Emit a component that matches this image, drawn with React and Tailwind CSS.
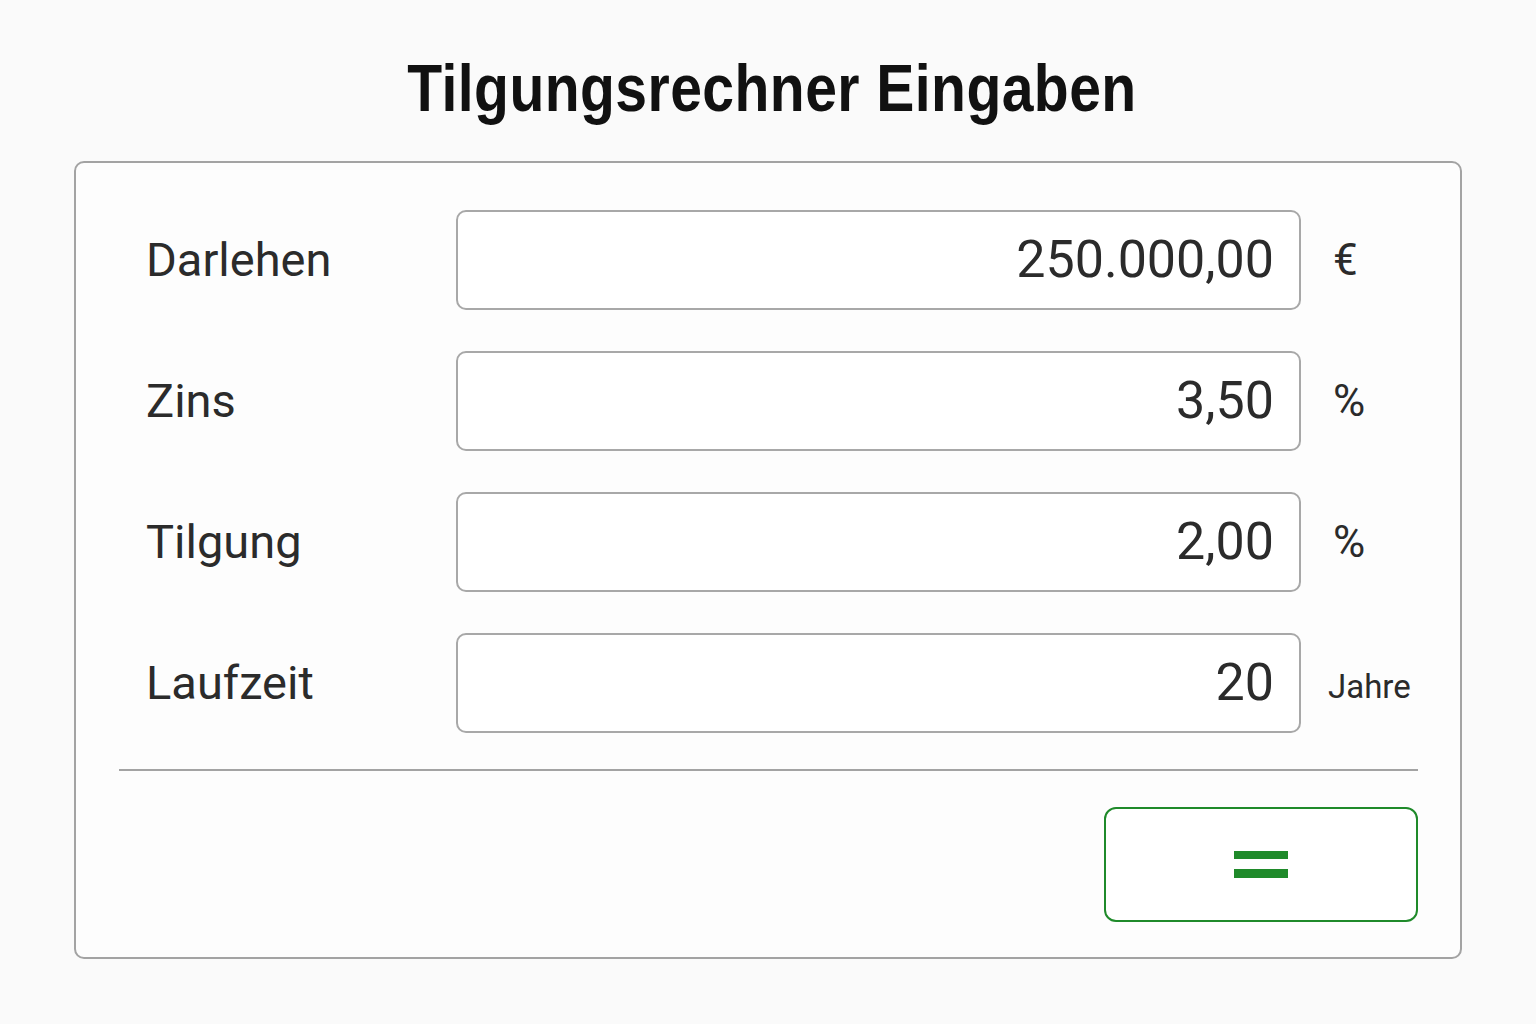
import React from 'react'

const rows = [
  { label: 'Darlehen', value: '250.000,00', unit: '€' },
  { label: 'Zins', value: '3,50', unit: '%' },
  { label: 'Tilgung', value: '2,00', unit: '%' },
  { label: 'Laufzeit', value: '20', unit: 'Jahre' },
]

export default function App() {
  return (
    <div className="w-[1536px] h-[1024px] bg-[#fafafa] flex flex-col items-center font-['Roboto',sans-serif] text-[#2b2b2b]">
      {/* Title (condensed bold) */}
      <h1 className="mt-[46px] h-[84px] pl-[10px] text-[66px] leading-[84px] font-bold text-[#111] font-['Liberation_Sans',sans-serif] tracking-[0.5px] scale-x-[0.865]">
        Tilgungsrechner Eingaben
      </h1>

      {/* Card */}
      <div className="mt-[31px] w-[1388px] h-[798px] border-2 border-[#a3a3a3] rounded-[10px] bg-[#fdfdfd] pl-[43px] pr-[42px] pt-[47px] flex flex-col">
        <div className="flex flex-col gap-[41px]">
          {rows.map((row) => (
            <div key={row.label} className="grid grid-cols-[337px_845px_1fr] items-center h-[100px]">
              <div className="pl-[27px] text-[47px]">{row.label}</div>
              <div className="h-[100px] border-2 border-[#a8a8a8] rounded-[10px] bg-white flex items-center justify-end pr-[25px] text-[52px]">
                {row.value}
              </div>
              <div className={row.unit === 'Jahre' ? 'pl-[27px] pt-[8px] text-[33px]' : 'pl-[32px] text-[44px]'}>
                {row.unit}
              </div>
            </div>
          ))}
        </div>

        {/* Divider */}
        <div className="mt-[36px] h-[2px] bg-[#a3a3a3]" />

        {/* Calculate button */}
        <div className="mt-[36px] flex justify-end">
          <button className="w-[314px] h-[115px] border-2 border-[#1f8a2a] rounded-[12px] bg-white flex flex-col items-center justify-center gap-[10px]">
            <span className="block w-[54px] h-[8px] bg-[#1f8a2a]" />
            <span className="block w-[54px] h-[9px] bg-[#1f8a2a]" />
          </button>
        </div>
      </div>
    </div>
  )
}
